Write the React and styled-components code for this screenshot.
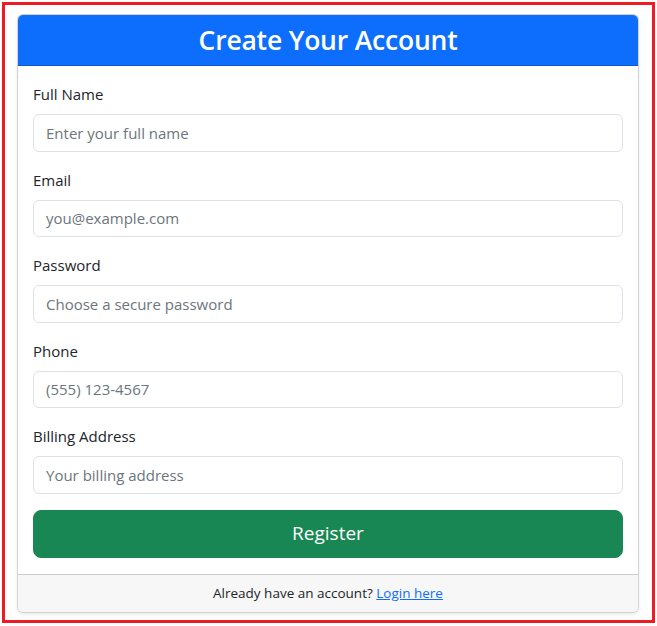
import styled, { createGlobalStyle } from 'styled-components';

const GlobalStyle = createGlobalStyle`
  * { box-sizing: border-box; }
  body {
    margin: 0;
    background: #fff;
    color: #212529;
    font-family: "Open Sans", "Noto Sans", "Liberation Sans", sans-serif;
    font-size: 16px;
    line-height: 1.5;
  }
`;

const Frame = styled.div`
  margin: 2px;
  width: 653px;
  height: 621px;
  border: 3px solid #ed1c24;
  padding: 9px 13px 7px 12px;
`;

const Card = styled.div`
  display: flex;
  flex-direction: column;
  border: 1px solid rgba(0, 0, 0, 0.175);
  border-radius: 6px;
  box-shadow: 0 2px 4px rgba(0, 0, 0, 0.075);
  overflow: hidden;
  background: #fff;
`;

const Header = styled.div`
  background: #0d6efd;
  border-bottom: 1px solid rgba(0, 0, 0, 0.175);
  padding: 8px 16px;
  text-align: center;
`;

const Title = styled.h3`
  margin: 0;
  color: #fff;
  font-size: 26.5px;
  font-weight: 600;
  line-height: 34px;
  letter-spacing: -0.2px;
`;

const Body = styled.form`
  display: flex;
  flex-direction: column;
  gap: 16px;
  padding: 16px 15px 16px 15px;
`;

const Field = styled.div`
  display: flex;
  flex-direction: column;
  gap: 8px;
`;

const Label = styled.label`
  font-size: 15px;
  line-height: 24px;
  color: #212529;
`;

const Input = styled.input`
  height: 37.5px;
  padding: 6px 12px;
  font: inherit;
  font-size: 15px;
  color: #212529;
  border: 1px solid #dee2e6;
  border-radius: 6px;
  background: #fff;
  outline: none;
  &::placeholder {
    color: #6c757d;
    opacity: 1;
  }
`;

const Button = styled.button`
  height: 48px;
  border: 1px solid #198754;
  border-radius: 8px;
  background: #198754;
  color: #fff;
  font: inherit;
  font-size: 19px;
  cursor: pointer;
`;

const Footer = styled.div`
  background: #f7f7f8;
  border-top: 1px solid rgba(0, 0, 0, 0.175);
  padding: 8px 16px;
  text-align: center;
  font-size: 13.5px;
  line-height: 21px;
`;

const Link = styled.a`
  color: #0d6efd;
  text-decoration: underline;
`;

const fields = [
  { id: 'name', label: 'Full Name', type: 'text', placeholder: 'Enter your full name' },
  { id: 'email', label: 'Email', type: 'email', placeholder: 'you@example.com' },
  { id: 'password', label: 'Password', type: 'password', placeholder: 'Choose a secure password' },
  { id: 'phone', label: 'Phone', type: 'tel', placeholder: '(555) 123-4567' },
  { id: 'address', label: 'Billing Address', type: 'text', placeholder: 'Your billing address' },
];

export default function App() {
  return (
    <>
      <GlobalStyle />
      <Frame>
        <Card>
          <Header>
            <Title>Create Your Account</Title>
          </Header>
          <Body onSubmit={(e) => e.preventDefault()}>
            {fields.map((f) => (
              <Field key={f.id}>
                <Label htmlFor={f.id}>{f.label}</Label>
                <Input id={f.id} type={f.type} placeholder={f.placeholder} />
              </Field>
            ))}
            <Button type="submit">Register</Button>
          </Body>
          <Footer>
            Already have an account? <Link href="#">Login here</Link>
          </Footer>
        </Card>
      </Frame>
    </>
  );
}
